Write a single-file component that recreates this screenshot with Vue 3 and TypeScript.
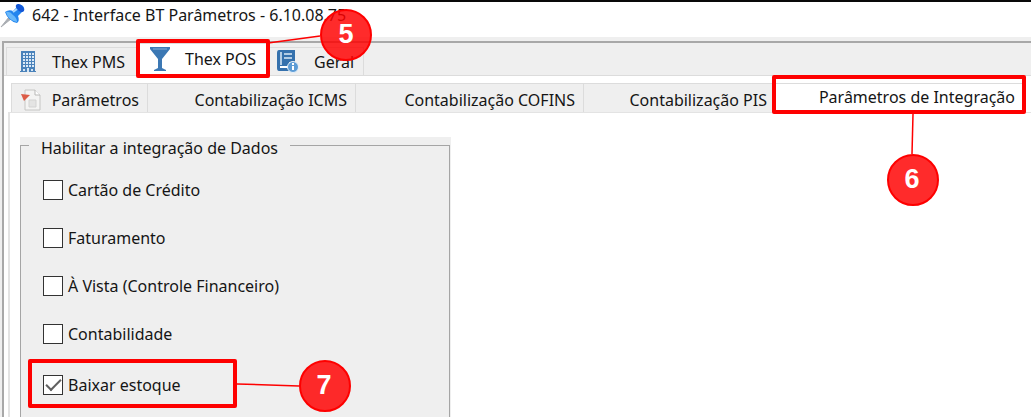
<script setup lang="ts">
import { reactive, ref } from 'vue'

interface Option {
  id: string
  label: string
  checked: boolean
}

const moduleTab = ref('pos')
const sectionTab = ref('integracao')

const sections = [
  { id: 'parametros', label: 'Parâmetros' },
  { id: 'icms', label: 'Contabilização ICMS' },
  { id: 'cofins', label: 'Contabilização COFINS' },
  { id: 'pis', label: 'Contabilização PIS' },
  { id: 'integracao', label: 'Parâmetros de Integração' },
]

const options = reactive<Option[]>([
  { id: 'cartao', label: 'Cartão de Crédito', checked: false },
  { id: 'faturamento', label: 'Faturamento', checked: false },
  { id: 'avista', label: 'À Vista (Controle Financeiro)', checked: false },
  { id: 'contabilidade', label: 'Contabilidade', checked: false },
  { id: 'estoque', label: 'Baixar estoque', checked: true },
])
</script>

<template>
  <div class="window">
    <header class="titlebar">
      <svg class="pin" width="26" height="26" viewBox="0 0 26 26" aria-hidden="true">
        <path d="M1 25 L9 15 L11 17 Z" fill="#a9adb2" stroke="#a9adb2" />
        <path d="M5 10 Q9 7 13 9 L17 5 Q19 1 23 4 Q26 8 22 10 L18 14 Q20 19 17 21 Q8 19 5 10Z" fill="#2385ee" />
        <path d="M6 10 Q10 9 13 13 Q17 16 17 20 Q8 18 6 10Z" fill="#68b8fa" />
        <ellipse cx="20" cy="6" rx="5" ry="3" transform="rotate(42 20 6)" fill="#1457d6" />
        <path d="M13 10 L17 7" stroke="#a8d8ff" stroke-width="2" />
      </svg>
      <h1>642 - Interface BT Parâmetros - 6.10.08.75</h1>
    </header>

    <main class="body">
      <div class="frame">
        <nav class="modules" role="tablist">
          <button class="module pms" :class="{ active: moduleTab === 'pms' }" role="tab" @click="moduleTab = 'pms'">
            <svg width="16" height="22" viewBox="0 0 16 22" aria-hidden="true">
              <path d="M1 0H15V20H16V21H0V20H1Z" fill="#4a82ba" />
              <path d="M3 3H14M3 6H14M3 9H14M3 12H14M3 15H14" stroke="#dbe9f6" stroke-width="2" stroke-dasharray="2 1" />
              <path d="M3 18H5V20H3ZM7 17H9V21H7ZM11 18H13V20H11Z" fill="#d5e6f5" />
            </svg>
            <span>Thex PMS</span>
          </button>
          <button class="module pos" :class="{ active: moduleTab === 'pos' }" role="tab" @click="moduleTab = 'pos'">
            <svg width="20" height="24" viewBox="0 0 20 24" aria-hidden="true">
              <path d="M0 0H20V2L12 12V21L16 23V24H4V23L8 21V12L0 2Z" fill="#3c78b4" />
              <path d="M3 2H17" stroke="#82abd1" />
            </svg>
            <span>Thex POS</span>
          </button>
          <button class="module geral" :class="{ active: moduleTab === 'geral' }" role="tab" @click="moduleTab = 'geral'">
            <svg width="22" height="23" viewBox="0 0 22 23" aria-hidden="true">
              <path d="M2 0H18V12H12V21H2Q0 21 0 18V3Q0 0 2 0Z" fill="#3571ad" />
              <path d="M4 2V15M7 4H15M7 8H15" stroke="#dceaf6" stroke-width="1.5" />
              <path d="M3 17H12" stroke="#fff" stroke-width="2" />
              <circle cx="16" cy="17" r="5.5" fill="#5b9bd5" stroke="#e8f1f9" />
              <path d="M16 16V20M16 13V15" stroke="#fff" stroke-width="2" />
            </svg>
            <span>Geral</span>
          </button>
        </nav>

        <div class="modulepage">
          <nav class="sections" role="tablist">
            <button
              v-for="s in sections"
              :key="s.id"
              class="section"
              :class="[s.id, { active: sectionTab === s.id }]"
              role="tab"
              @click="sectionTab = s.id"
            >
              <svg v-if="s.id === 'parametros'" width="20" height="22" viewBox="0 0 20 22" aria-hidden="true">
                <path d="M4 1H14L19 6V21H4Z" fill="#f4f4f3" stroke="#c6c6c4" />
                <path d="M14 1V6H19" fill="#fff" stroke="#b9b9b7" />
                <path d="M8 11H15V18H8Z" fill="#e4e4e3" stroke="#d3d3d2" />
                <path d="M0 5L9 6L3 12Z" fill="#dc5c47" />
              </svg>
              <span>{{ s.label }}</span>
            </button>
          </nav>

          <div class="sectionpage">
            <div class="group">
              <fieldset>
                <legend>Habilitar a integração de Dados</legend>
                <div v-for="o in options" :key="o.id" class="option" :class="o.id">
                  <input :id="o.id" v-model="o.checked" type="checkbox" />
                  <label :for="o.id">{{ o.label }}</label>
                </div>
              </fieldset>
            </div>
          </div>
        </div>
      </div>
    </main>

    <svg class="notes" width="1031" height="417" viewBox="0 0 1031 417">
      <g fill="none" stroke="#fe0000" stroke-width="4" stroke-linejoin="round">
        <rect x="138" y="41" width="130" height="35" />
        <rect x="774" y="77" width="250" height="35" />
        <rect x="30" y="361" width="205" height="45" />
      </g>
      <g stroke="#fe0000" stroke-width="1.5">
        <path d="M268 43L320 36" />
        <path d="M913 114L912 154" />
        <path d="M237 384L299 386" />
      </g>
      <g fill="#ff0000" fill-opacity="0.83" stroke="#fe0000" stroke-width="2">
        <circle cx="346" cy="35" r="25" />
        <circle cx="913" cy="180" r="25" />
        <circle cx="325" cy="386" r="25" />
      </g>
      <g class="numbers">
        <text x="346" y="43">5</text>
        <text x="912" y="188">6</text>
        <text x="324" y="394">7</text>
      </g>
    </svg>
  </div>
</template>

<style>
body {
  margin: 0;
}
</style>

<style scoped>
.window {
  position: relative;
  display: flex;
  flex-direction: column;
  height: 100vh;
  overflow: hidden;
  box-sizing: border-box;
  border-top: 2px solid #090909;
  background: #fff;
  color: #151515;
  font-family: 'Noto Sans', 'Open Sans', sans-serif;
  font-size: 16px;
  line-height: 20px;
}
.titlebar {
  display: flex;
  align-items: flex-start;
  flex: none;
  height: 35px;
  gap: 6px;
}
h1 {
  margin: 3px 0 0;
  font-size: 16px;
  line-height: 20px;
  font-weight: 400;
  white-space: nowrap;
}
.pin {
  flex: none;
}
.body {
  display: flex;
  flex: 1;
  min-height: 0;
  padding: 4px 0 0 2px;
  background: #efefef;
}
.frame {
  display: flex;
  flex-direction: column;
  flex: 1;
  min-width: 0;
  border-top: 2px solid #a8a8a8;
  border-left: 2px solid #a8a8a8;
}
button {
  display: flex;
  align-items: center;
  flex: none;
  box-sizing: border-box;
  margin: 0;
  padding: 0;
  border: 1px solid #dcdcdc;
  border-width: 1px 1px 0 0;
  background: #efefef;
  color: inherit;
  font: inherit;
  white-space: nowrap;
}
.modules {
  display: flex;
  align-items: flex-end;
  height: 32px;
  padding-left: 2px;
}
.module {
  height: 28px;
}
.pms {
  width: 131px;
  gap: 16px;
  padding: 0 0 0 13px;
  border-left-width: 1px;
}
.pos {
  width: 131px;
  gap: 15px;
  padding: 0 0 2px 13px;
}
.geral {
  width: 96px;
  gap: 15px;
  padding: 0 0 0 9px;
}
.module.active {
  height: 32px;
  background: #fff;
}
.modulepage {
  display: flex;
  flex-direction: column;
  flex: 1;
  min-height: 0;
  padding: 7px 0 0 4px;
  border-top: 1px solid #dcdcdc;
  background: #fff;
}
.sections {
  display: flex;
  flex: none;
  height: 29px;
  padding-left: 3px;
}
.section {
  justify-content: flex-end;
  padding: 3px 8px 0 0;
}
.parametros {
  width: 137px;
  gap: 11px;
  border-left-width: 1px;
}
.icms {
  width: 208px;
}
.cofins {
  width: 228px;
}
.pis {
  width: 190px;
  padding-right: 6px;
}
.integracao {
  width: 252px;
  padding-right: 10px;
}
.section.active {
  padding-top: 0;
  padding-bottom: 3px;
  background: #fff;
}
.sectionpage {
  flex: 1;
  min-height: 0;
  padding: 24px 0 0 10px;
  border: 2px solid #e3e3e3;
  border-width: 1px 0 0 2px;
}
.group {
  box-sizing: border-box;
  width: 431px;
  padding: 0 1px 24px 0;
  background: #efefef;
}
fieldset {
  min-width: 0;
  margin: 0;
  padding: 13px 0 24px 22px;
  border: 1px solid #a5a5a5;
}
legend {
  height: 16px;
  margin-left: -14px;
  padding: 0 12px;
  line-height: 22px;
}
.option {
  display: flex;
  align-items: center;
  height: 48px;
  gap: 5px;
}
.option.estoque {
  height: 54px;
}
input {
  appearance: none;
  box-sizing: border-box;
  flex: none;
  width: 20px;
  height: 20px;
  margin: 0;
  border: 1px solid #333;
  background: #fff;
}
input:checked::after {
  content: '';
  display: block;
  box-sizing: border-box;
  width: 15px;
  height: 8px;
  margin: 3px 0 0 2px;
  border: 2px solid #606060;
  border-width: 0 0 2px 2px;
  transform: rotate(-45deg);
}
.notes {
  position: absolute;
  top: -2px;
  left: 0;
  pointer-events: none;
}
.numbers {
  fill: #fff;
  font: 700 27px 'Liberation Sans', sans-serif;
  text-anchor: middle;
}
</style>
